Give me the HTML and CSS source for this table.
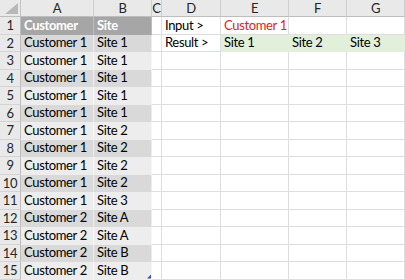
FILE: index.html
```html
<!DOCTYPE html>
<html>
<head>
<meta charset="utf-8">
<link rel="stylesheet" href="styles.css">
</head>
<body>
<div class="sheet">
  <div class="corner"><svg width="20" height="16" viewBox="0 0 20 16"><polygon points="5,14 18,14 18,3" fill="#b8b8b8"/></svg></div>
  <div class="colhead">A</div><div class="colhead">B</div><div class="colhead">C</div><div class="colhead">D</div><div class="colhead">E</div><div class="colhead">F</div><div class="colhead">G</div>

  <div class="rowhead">1</div><div class="cell tblhead">Customer</div><div class="cell tblhead">Site</div><div class="cell"></div><div class="cell">Input &gt;</div><div class="cell red">Customer 1</div><div class="cell"></div><div class="cell"></div>
  <div class="rowhead">2</div><div class="cell dark">Customer 1</div><div class="cell dark">Site 1</div><div class="cell"></div><div class="cell">Result &gt;</div><div class="cell green">Site 1</div><div class="cell green">Site 2</div><div class="cell green">Site 3</div>
  <div class="rowhead">3</div><div class="cell light">Customer 1</div><div class="cell light">Site 1</div><div class="cell"></div><div class="cell"></div><div class="cell"></div><div class="cell"></div><div class="cell"></div>
  <div class="rowhead">4</div><div class="cell dark">Customer 1</div><div class="cell dark">Site 1</div><div class="cell"></div><div class="cell"></div><div class="cell"></div><div class="cell"></div><div class="cell"></div>
  <div class="rowhead">5</div><div class="cell light">Customer 1</div><div class="cell light">Site 1</div><div class="cell"></div><div class="cell"></div><div class="cell"></div><div class="cell"></div><div class="cell"></div>
  <div class="rowhead">6</div><div class="cell dark">Customer 1</div><div class="cell dark">Site 1</div><div class="cell"></div><div class="cell"></div><div class="cell"></div><div class="cell"></div><div class="cell"></div>
  <div class="rowhead">7</div><div class="cell light">Customer 1</div><div class="cell light">Site 2</div><div class="cell"></div><div class="cell"></div><div class="cell"></div><div class="cell"></div><div class="cell"></div>
  <div class="rowhead">8</div><div class="cell dark">Customer 1</div><div class="cell dark">Site 2</div><div class="cell"></div><div class="cell"></div><div class="cell"></div><div class="cell"></div><div class="cell"></div>
  <div class="rowhead">9</div><div class="cell light">Customer 1</div><div class="cell light">Site 2</div><div class="cell"></div><div class="cell"></div><div class="cell"></div><div class="cell"></div><div class="cell"></div>
  <div class="rowhead">10</div><div class="cell dark">Customer 1</div><div class="cell dark">Site 2</div><div class="cell"></div><div class="cell"></div><div class="cell"></div><div class="cell"></div><div class="cell"></div>
  <div class="rowhead">11</div><div class="cell light">Customer 1</div><div class="cell light">Site 3</div><div class="cell"></div><div class="cell"></div><div class="cell"></div><div class="cell"></div><div class="cell"></div>
  <div class="rowhead">12</div><div class="cell dark">Customer 2</div><div class="cell dark">Site A</div><div class="cell"></div><div class="cell"></div><div class="cell"></div><div class="cell"></div><div class="cell"></div>
  <div class="rowhead">13</div><div class="cell light">Customer 2</div><div class="cell light">Site A</div><div class="cell"></div><div class="cell"></div><div class="cell"></div><div class="cell"></div><div class="cell"></div>
  <div class="rowhead">14</div><div class="cell dark">Customer 2</div><div class="cell dark">Site B</div><div class="cell"></div><div class="cell"></div><div class="cell"></div><div class="cell"></div><div class="cell"></div>
  <div class="rowhead">15</div><div class="cell light">Customer 2</div><div class="cell light last">Site B<span class="handle"></span></div><div class="cell"></div><div class="cell"></div><div class="cell"></div><div class="cell"></div><div class="cell"></div>
</div>
</body>
</html>
```

FILE: styles.css
```css
html, body {
  margin: 0;
  padding: 0;
  background: #ffffff;
  overflow: hidden;
}

.sheet {
  display: grid;
  grid-template-columns: 21px 73px 58px 10px 59px 68px 58px 58px;
  grid-template-rows: 17px repeat(15, 17.5px);
  font-family: "Lato", "Liberation Sans", sans-serif;
  font-size: 13px;
  letter-spacing: -0.35px;
  color: #000;
}

.corner {
  background: #e9e9e9;
  border-right: 1px solid #c4c4c4;
  border-bottom: 1px solid #bdbdbd;
  box-sizing: border-box;
}

.corner svg {
  display: block;
}

.colhead {
  background: #e9e9e9;
  color: #262626;
  border-right: 1px solid #cfcfcf;
  border-bottom: 1px solid #bdbdbd;
  box-sizing: border-box;
  display: flex;
  align-items: center;
  justify-content: center;
}

.rowhead {
  background: #e9e9e9;
  color: #262626;
  border-right: 1px solid #bdbdbd;
  border-bottom: 1px solid #d4d4d4;
  box-sizing: border-box;
  display: flex;
  align-items: center;
  justify-content: center;
}

.cell {
  position: relative;
  box-sizing: border-box;
  border-right: 1px solid #dedede;
  border-bottom: 1px solid #dedede;
  padding: 0 2px 1px 3px;
  display: flex;
  align-items: flex-end;
  white-space: nowrap;
  overflow: visible;
  line-height: 16px;
}

.tblhead {
  background: #a6a6a6;
  color: #ffffff;
  font-weight: bold;
  border-right-color: #bdbdbd;
  border-bottom-color: #a6a6a6;
}

.dark {
  background: #d9d9d9;
  border-right-color: #ececec;
  border-bottom-color: #d9d9d9;
}

.light {
  background: #ededed;
  border-right-color: #f7f7f7;
  border-bottom-color: #ededed;
}

.red {
  color: #e0202e;
}

.green {
  background: #e2efda;
  border-right-color: #e2efda;
  border-bottom-color: #e2efda;
}

/* table resize grip in the bottom-right corner of the list */
.handle {
  position: absolute;
  right: 0;
  bottom: 0;
  width: 4px;
  height: 4px;
  background: #3f51b5;
  clip-path: polygon(100% 0, 100% 100%, 0 100%);
}
```
